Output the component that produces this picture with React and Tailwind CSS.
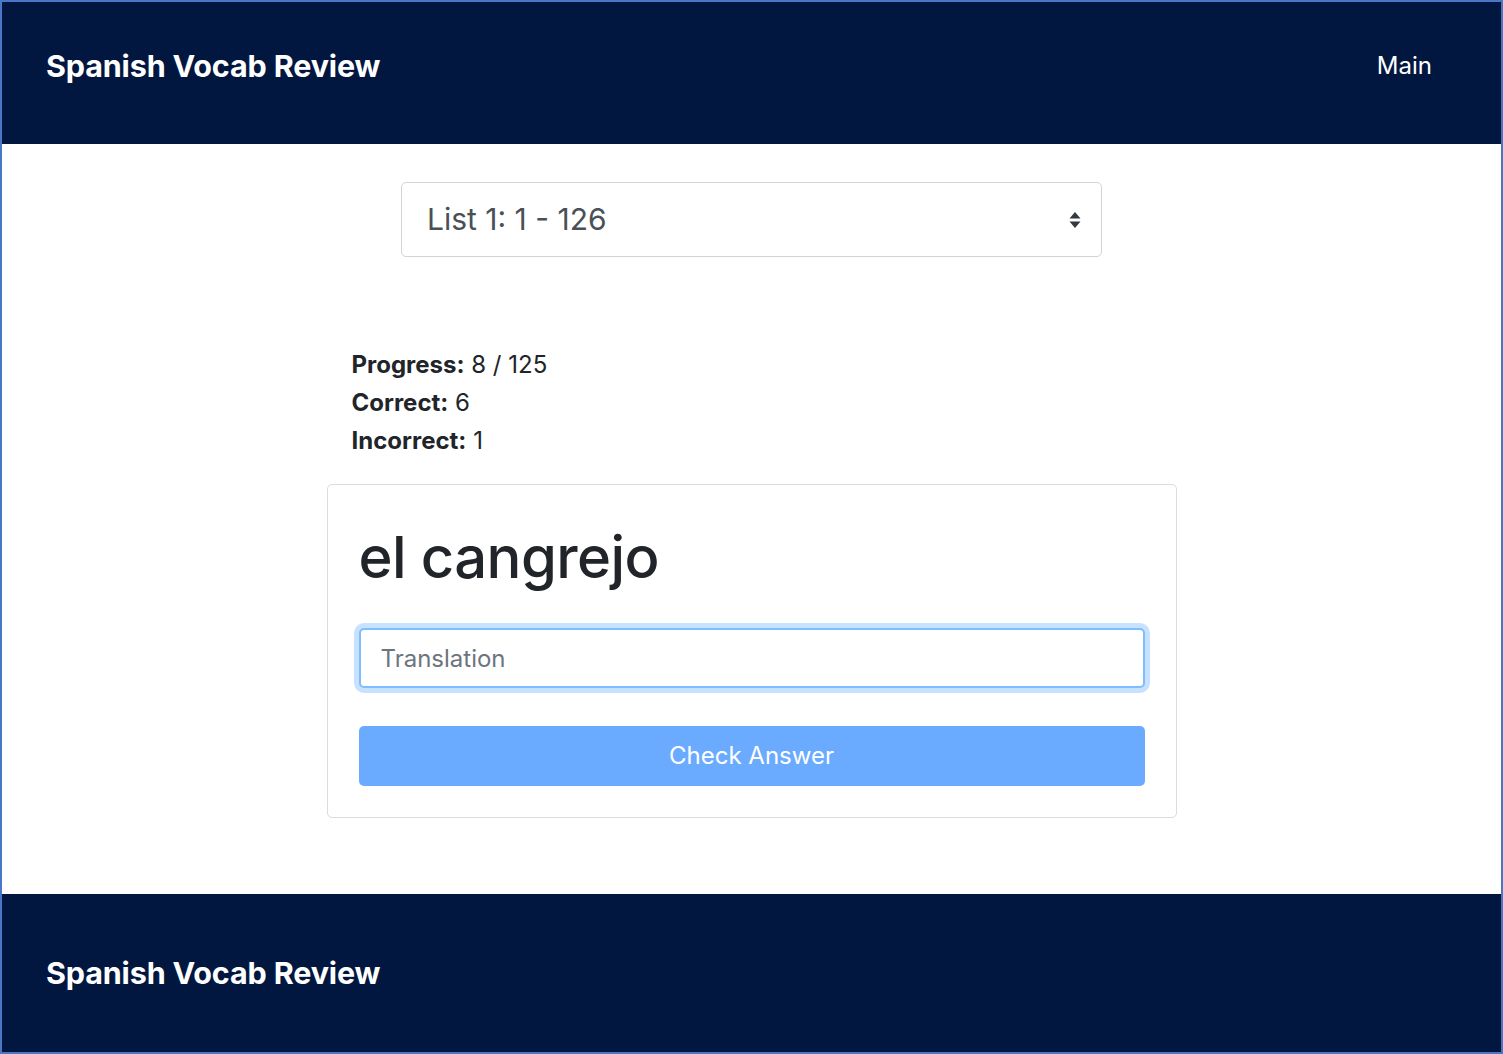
import React from 'react';

const font = { fontFamily: 'Inter, "Liberation Sans", sans-serif' };

const Brand = () => (
  <span className="text-[30.5px] font-bold tracking-[-0.15px] text-white">Spanish Vocab Review</span>
);

const SelectArrows = () => (
  <svg width="12" height="18" viewBox="0 0 12 18" aria-hidden="true">
    <path d="M6 1 L11.5 7.5 H0.5 Z" fill="#343a40" />
    <path d="M6 17 L11.5 10.5 H0.5 Z" fill="#343a40" />
  </svg>
);

export default function App() {
  return (
    <div
      className="flex h-[1054px] w-full flex-col border-2 border-[#4a76c6] bg-white text-[#212529]"
      style={font}
    >
      <header className="flex h-[142px] shrink-0 items-center justify-between bg-[#021740] pb-[14px] pl-[44px] pr-[69px]">
        <Brand />
        <a className="text-[24px] text-white">Main</a>
      </header>

      <main className="flex flex-1 flex-col items-center">
        <div className="mt-[38px] flex h-[75px] w-[701px] items-center justify-between rounded-[5px] border border-[#ced4da] pl-[25px] pr-[20px]">
          <span className="text-[30px] text-[#495057]">List 1: 1 - 126</span>
          <SelectArrows />
        </div>

        <div className="mt-[89px] w-[800px] text-[24px] leading-[38px]">
          <div><span className="font-bold">Progress:</span> 8 / 125</div>
          <div><span className="font-bold">Correct:</span> 6</div>
          <div><span className="font-bold">Incorrect:</span> 1</div>
        </div>

        <div className="mt-[24px] flex w-[850px] flex-col rounded-[5px] border border-[#dcdcdc] px-[31px] pb-[31px] pt-[37px]">
          <h1 className="text-[58px] font-medium leading-[70px] tracking-[-0.6px]">el cangrejo</h1>
          <input
            className="mt-[36px] h-[60px] w-full rounded-[5px] border-2 border-[#80bdff] bg-white px-[20px] text-[24px] text-[#495057] shadow-[0_0_0_5px_rgba(0,123,255,0.22)] outline-none placeholder:text-[#6c757d]"
            placeholder="Translation"
          />
          <button className="mt-[38px] h-[60px] w-full rounded-[5px] bg-[#6aabff] text-[24px] text-white">
            Check Answer
          </button>
        </div>
      </main>

      <footer className="flex h-[158px] shrink-0 items-center bg-[#021740] pl-[44px]">
        <Brand />
      </footer>
    </div>
  );
}
